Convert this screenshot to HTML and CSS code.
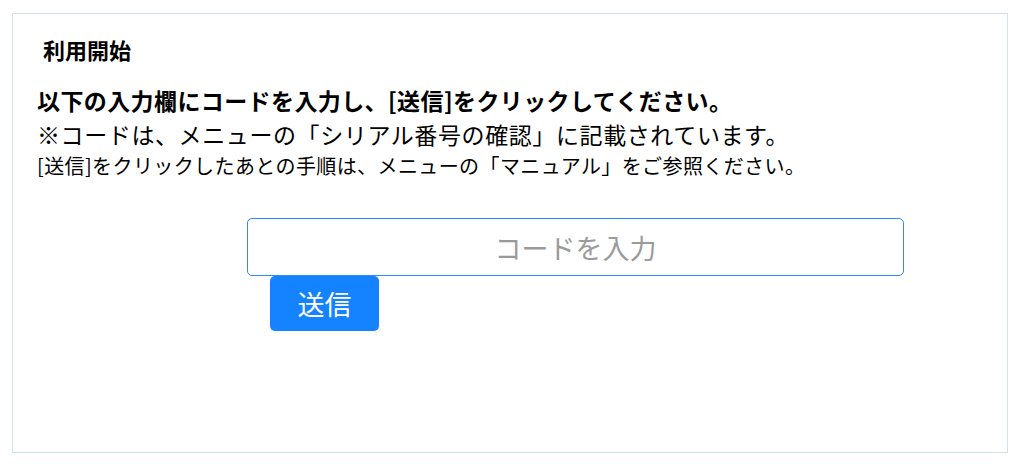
FILE: index.html
```html
<!DOCTYPE html>
<html lang="ja">
<head>
    <meta charset="UTF-8">
    <meta name="viewport" content="width=device-width, initial-scale=1.0">
    <title>利用開始</title>
    <link rel="stylesheet" href="styles.css">
</head>
<body>

    <div class="panel">
        <h3 class="title">利用開始</h3>

        <p class="lead">以下の入力欄にコードを入力し、[送信]をクリックしてください。</p>
        <p class="note">※コードは、メニューの「シリアル番号の確認」に記載されています。</p>
        <p class="small">[送信]をクリックしたあとの手順は、メニューの「マニュアル」をご参照ください。</p>

        <form class="code-form" id="codeForm">
            <input type="text" class="code-input" name="code" placeholder="コードを入力">
            <button type="submit" class="submit-btn">送信</button>
        </form>
    </div>

</body>
</html>
```

FILE: styles.css
```css
body {
    font-family: "Noto Sans CJK JP", "Noto Sans", sans-serif;
    background-color: #fff;
    color: #000;
    margin: 0;
    padding: 13px 16px 0 12px;
}

.panel {
    box-sizing: border-box;
    height: 440px;
    border: 1px solid #cfe4e8;
    padding: 19px 0 0 24px;
}

.title {
    margin: 0 0 17px 6px;
    font-size: 22px;
    font-weight: bold;
    line-height: 33px;
}

.lead,
.note,
.small {
    margin: 0;
}

.lead {
    font-size: 23px;
    font-weight: bold;
    letter-spacing: 0.4px;
}

.note {
    font-size: 23px;
    letter-spacing: 0.6px;
}

.small {
    font-size: 20px;
    letter-spacing: 0.4px;
}

.code-form {
    margin: 38px 0 0 210px;
}

.code-input {
    display: block;
    box-sizing: border-box;
    width: 657px;
    height: 58px;
    border: 1.5px solid #2e8af7;
    border-radius: 5px;
    font-family: inherit;
    font-size: 27px;
    text-align: center;
    color: #000;
    outline: none;
}

.code-input::placeholder {
    color: #9a9a9a;
}

.submit-btn {
    display: block;
    box-sizing: border-box;
    margin: 0 0 0 23px;
    width: 109px;
    height: 55px;
    border: none;
    border-radius: 5px;
    background: #1582ff;
    color: #fff;
    font-family: inherit;
    font-size: 27px;
    cursor: pointer;
}
```
